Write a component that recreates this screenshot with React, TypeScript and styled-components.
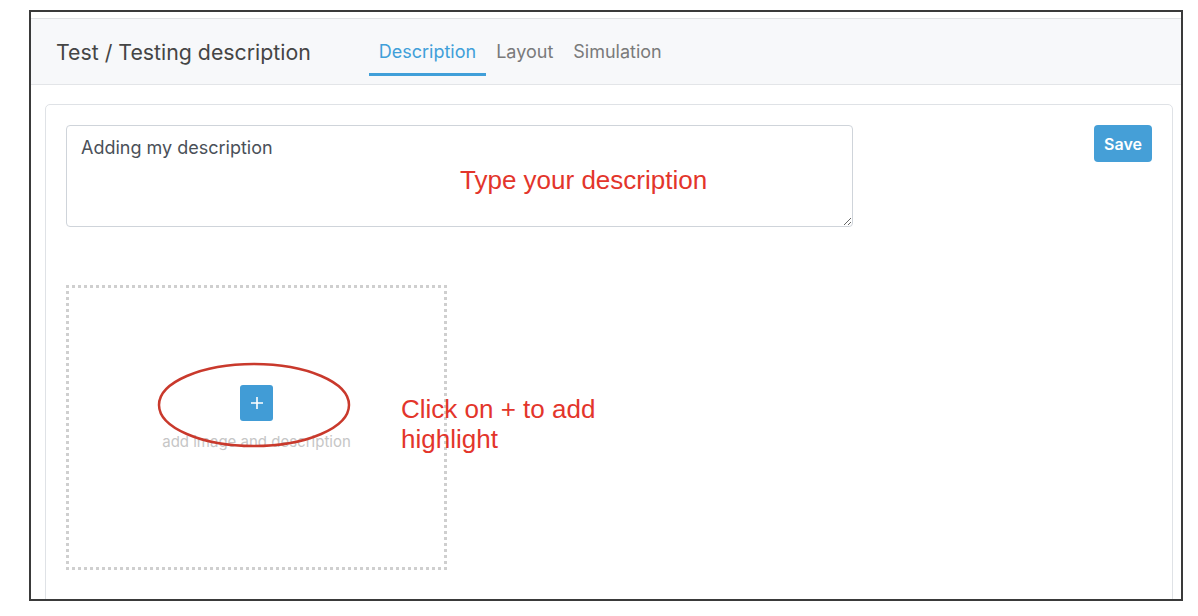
import React from 'react';
import styled, { createGlobalStyle } from 'styled-components';

const GlobalStyle = createGlobalStyle`
  html, body {
    margin: 0;
    padding: 0;
    background: #fff;
  }
  body {
    font-family: Inter, "Liberation Sans", Arial, sans-serif;
  }
`;

const Frame = styled.div`
  margin: 10px 0 0 29px;
  width: 1154px;
  height: 591px;
  box-sizing: border-box;
  border: 2px solid #3a3a3a;
  padding-top: 6px;
  overflow: hidden;
  background: #fff;
`;

const Header = styled.div`
  display: flex;
  align-items: stretch;
  height: 65px;
  padding: 0 25px;
  background: #f7f8fa;
  border-top: 1px solid #dfe1e4;
  border-bottom: 1px solid #e3e5e8;
`;

const Title = styled.div`
  display: flex;
  align-items: center;
  font-size: 21.3px;
  color: #454545;
  margin-right: 58px;
  padding-top: 1px;
`;

const Tabs = styled.div`
  display: flex;
`;

const Tab = styled.div<{ $active?: boolean }>`
  display: flex;
  align-items: center;
  padding: 10px 10px 0;
  margin-bottom: 8px;
  font-size: 18px;
  color: ${(p) => (p.$active ? '#409fd9' : '#7a7a7a')};
  border-bottom: 3px solid ${(p) => (p.$active ? '#409fd9' : 'transparent')};
`;

const Card = styled.div`
  margin: 19px 8px 0 14px;
  padding: 20px;
  height: 520px;
  border: 1px solid #dfe2e6;
  border-radius: 5px;
`;

const TopRow = styled.div`
  display: flex;
  align-items: flex-start;
  justify-content: space-between;
  position: relative;
`;

const DescriptionInput = styled.textarea`
  width: 787px;
  height: 102px;
  box-sizing: border-box;
  padding: 8px 14px;
  font-family: Inter, "Liberation Sans", Arial, sans-serif;
  font-size: 18px;
  line-height: 28px;
  color: #4a5058;
  border: 1px solid #cfd4da;
  border-radius: 4px;
  outline: none;
`;

const SaveButton = styled.button`
  width: 58px;
  height: 37px;
  border: none;
  border-radius: 4px;
  background: #459fd7;
  color: #fff;
  font-family: Inter, "Liberation Sans", Arial, sans-serif;
  font-size: 16px;
  font-weight: 600;
`;

const Note = styled.div<{ $left: number; $top: number }>`
  position: absolute;
  left: ${(p) => p.$left}px;
  top: ${(p) => p.$top}px;
  font-family: "Liberation Sans", Arial, sans-serif;
  font-size: 26px;
  line-height: 30px;
  color: #e3352b;
  white-space: nowrap;
`;

const Gallery = styled.div`
  position: relative;
  margin-top: 58px;
`;

const DropBox = styled.div`
  width: 381px;
  height: 285px;
  box-sizing: border-box;
  border: 3px dotted #cfcfcf;
  display: flex;
  flex-direction: column;
  align-items: center;
  justify-content: center;
  padding-bottom: 20px;
`;

const PlusButton = styled.div`
  width: 33px;
  height: 36px;
  border-radius: 3px;
  background: #419cd6;
  color: #fff;
  display: flex;
  align-items: center;
  justify-content: center;
`;

const AddLabel = styled.div`
  margin-top: 11px;
  font-size: 15px;
  color: #c6c6c6;
`;

const Ellipse = styled.svg`
  position: absolute;
  left: 90px;
  top: 76px;
`;

export default function App() {
  return (
    <>
      <GlobalStyle />
      <Frame>
        <Header>
          <Title>Test / Testing description</Title>
          <Tabs>
            <Tab $active>Description</Tab>
            <Tab>Layout</Tab>
            <Tab>Simulation</Tab>
          </Tabs>
        </Header>
        <Card>
          <TopRow>
            <DescriptionInput defaultValue="Adding my description" />
            <SaveButton>Save</SaveButton>
            <Note $left={394} $top={40}>Type your description</Note>
          </TopRow>
          <Gallery>
            <DropBox>
              <PlusButton>
                <svg width="14" height="14" viewBox="0 0 14 14">
                  <path d="M7 1v12M1 7h12" stroke="#fff" strokeWidth="1.6" />
                </svg>
              </PlusButton>
              <AddLabel>add image and description</AddLabel>
            </DropBox>
            <Ellipse width="196" height="90" viewBox="0 0 196 90">
              <ellipse cx="98" cy="44" rx="95" ry="41" fill="none" stroke="#c9392c" strokeWidth="2.5" />
            </Ellipse>
            <Note $left={335} $top={109}>
              Click on + to add
              <br />
              highlight
            </Note>
          </Gallery>
        </Card>
      </Frame>
    </>
  );
}
